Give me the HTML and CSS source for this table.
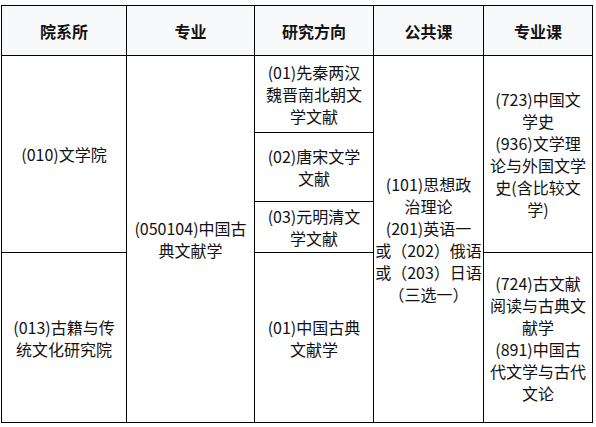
FILE: index.html
```html
<!DOCTYPE html>
<html lang="zh-CN">
<head>
<meta charset="utf-8">
<title>中国古典文献学</title>
<link rel="stylesheet" href="styles.css">
</head>
<body>
<div class="grid">
  <div class="cell head">院系所</div>
  <div class="cell head">专业</div>
  <div class="cell head">研究方向</div>
  <div class="cell head">公共课</div>
  <div class="cell head">专业课</div>

  <div class="cell dept-a">(010)文学院</div>
  <div class="cell major">(050104)中国古<br>典文献学</div>
  <div class="cell dir-1">(01)先秦两汉<br>魏晋南北朝文<br>学文献</div>
  <div class="cell public">(101)思想政<br>治理论<br>(201)英语一<br>或（202）俄语<br>或（203）日语<br>（三选一）</div>
  <div class="cell course-a">(723)中国文<br>学史<br>(936)文学理<br>论与外国文学<br>史(含比较文<br>学)</div>
  <div class="cell dir-2">(02)唐宋文学<br>文献</div>
  <div class="cell dir-3">(03)元明清文<br>学文献</div>

  <div class="cell dept-b">(013)古籍与传<br>统文化研究院</div>
  <div class="cell dir-4">(01)中国古典<br>文献学</div>
  <div class="cell course-b">(724)古文献<br>阅读与古典文<br>献学<br>(891)中国古<br>代文学与古代<br>文论</div>
</div>
</body>
</html>
```

FILE: styles.css
```css
html, body {
  margin: 0;
  padding: 0;
  background: #fff;
}

body {
  padding: 5px 0 0 1px;
  font-family: "Noto Sans CJK SC", "Noto Sans", sans-serif;
  font-size: 16px;
  color: #111;
}

.grid {
  display: grid;
  width: 592px;
  box-sizing: border-box;
  padding: 1px;
  gap: 1px;
  background: #000;
  grid-template-columns: 124px 127px 118px 109px 108px;
  grid-template-rows: 49px 76px 68px 50px 169px;
}

.cell {
  background: #fff;
  display: flex;
  align-items: center;
  justify-content: center;
  text-align: center;
  line-height: 22px;
  white-space: nowrap;
}

.head {
  background: #f8f9fa;
  font-weight: bold;
}

.dept-a { grid-column: 1; grid-row: 2 / 5; }
.dept-b { grid-column: 1; grid-row: 5; }
.major { grid-column: 2; grid-row: 2 / 6; }
.dir-1 { grid-column: 3; grid-row: 2; }
.dir-2 { grid-column: 3; grid-row: 3; }
.dir-3 { grid-column: 3; grid-row: 4; }
.dir-4 { grid-column: 3; grid-row: 5; }
.public { grid-column: 4; grid-row: 2 / 6; }
.course-a { grid-column: 5; grid-row: 2 / 5; }
.course-b { grid-column: 5; grid-row: 5; }
```
